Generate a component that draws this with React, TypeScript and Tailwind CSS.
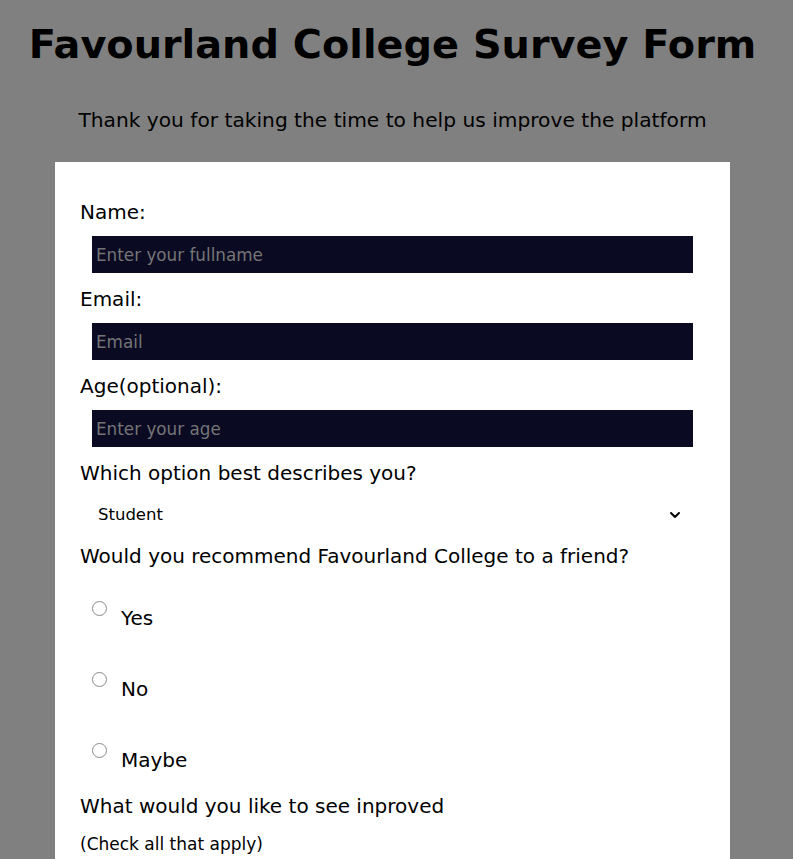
import { ChevronDown } from "lucide-react";

const font = { fontFamily: '"DejaVu Sans", Verdana, sans-serif' };

function Field({ label, placeholder, type = "text" }: { label: string; placeholder: string; type?: string }) {
  return (
    <div>
      <label className="block text-[20px] leading-[28px]">{label}</label>
      <input
        type={type}
        placeholder={placeholder}
        className="mt-[10px] mb-[12px] ml-[12px] block h-[37px] w-[601px] bg-[#0a0a23] px-[4px] text-[16.8px] text-white placeholder:text-[#757575] outline-none"
      />
    </div>
  );
}

function Radio({ label }: { label: string }) {
  return (
    <label className="ml-[12px] flex h-[71px] items-start">
      <span className="mt-[1px] block h-[15px] w-[15px] rounded-full border border-[#8a8a8a] bg-white" />
      <span className="ml-[14px] mt-[6px] text-[20px] leading-[24px]">{label}</span>
    </label>
  );
}

export default function App() {
  return (
    <div className="min-h-[859px] bg-[#808080] text-black" style={font}>
      <div className="w-[785px]">
        <h1 className="pt-[18px] text-center text-[39.8px] font-bold leading-[52px]">Favourland College Survey Form</h1>
        <p className="mt-[36px] text-center text-[20.2px] leading-[28px]">
          Thank you for taking the time to help us improve the platform
        </p>
        <form className="ml-[55px] mt-[28px] w-[675px] bg-white pl-[25px] pt-[36px] pb-[20px]">
          <Field label="Name:" placeholder="Enter your fullname" />
          <Field label="Email:" placeholder="Email" type="email" />
          <Field label="Age(optional):" placeholder="Enter your age" type="number" />
          <label className="block text-[20px] leading-[28px]">Which option best describes you?</label>
          <div className="relative ml-[12px] mt-[15px] mb-[14px] w-[601px]">
            <select className="h-[26px] w-full appearance-none bg-white pl-[6px] text-[16.5px] outline-none">
              <option>Student</option>
              <option>Full Time Job</option>
              <option>Prefer not to say</option>
            </select>
            <ChevronDown size={16} strokeWidth={3} className="pointer-events-none absolute right-[10px] top-[5px]" />
          </div>
          <p className="text-[20px] leading-[28px]">Would you recommend Favourland College to a friend?</p>
          <div className="mt-[30px]">
            <Radio label="Yes" />
            <Radio label="No" />
            <Radio label="Maybe" />
          </div>
          <p className="-mt-[21px] text-[20px] leading-[28px]">What would you like to see inproved</p>
          <p className="mt-[12px] text-[17px] leading-[24px]">(Check all that apply)</p>
        </form>
      </div>
    </div>
  );
}
